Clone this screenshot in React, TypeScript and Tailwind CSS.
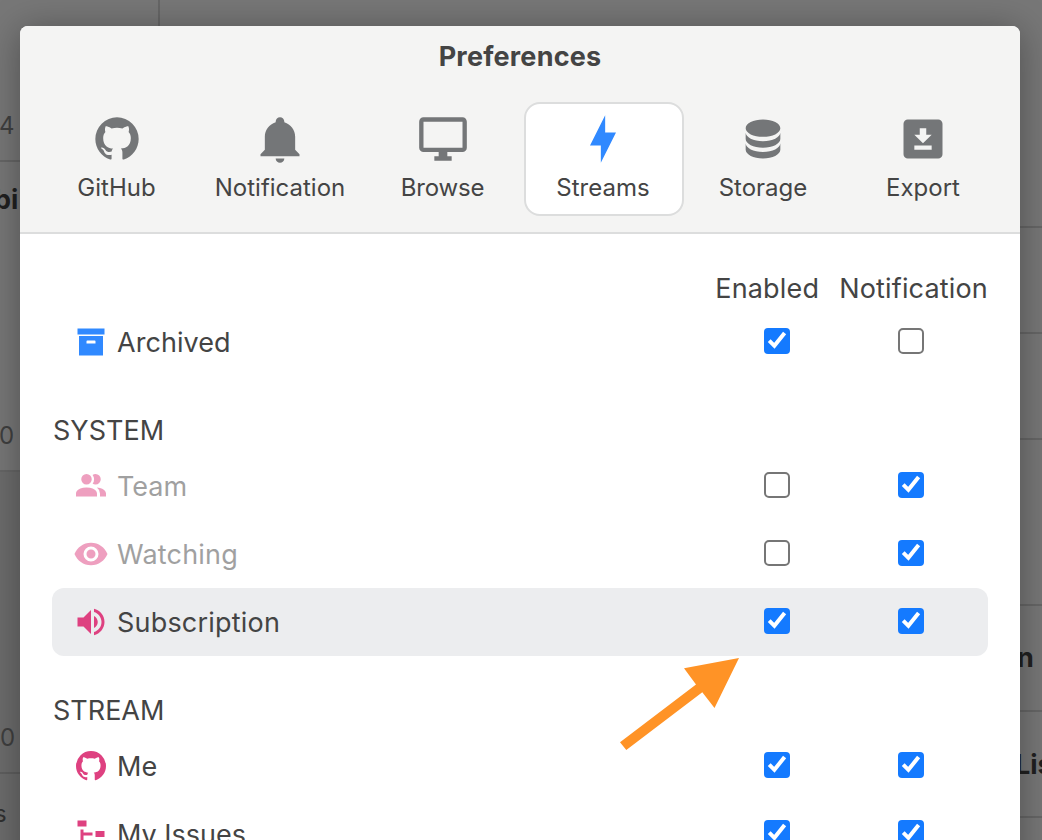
import React from "react";

const ICONS = {
  github:
    "M12,2A10,10 0 0,0 2,12C2,16.42 4.87,20.17 8.84,21.5C9.34,21.58 9.5,21.27 9.5,21C9.5,20.77 9.5,20.14 9.5,19.31C6.73,19.91 6.14,17.97 6.14,17.97C5.68,16.81 5.03,16.5 5.03,16.5C4.12,15.88 5.1,15.9 5.1,15.9C6.1,15.97 6.63,16.93 6.63,16.93C7.5,18.45 8.97,18 9.54,17.76C9.63,17.11 9.89,16.67 10.17,16.42C7.95,16.17 5.62,15.31 5.62,11.5C5.62,10.39 6,9.5 6.65,8.79C6.55,8.54 6.2,7.5 6.75,6.15C6.75,6.15 7.59,5.88 9.5,7.17C10.29,6.95 11.15,6.84 12,6.84C12.85,6.84 13.71,6.95 14.5,7.17C16.41,5.88 17.25,6.15 17.25,6.15C17.8,7.5 17.45,8.54 17.35,8.79C18,9.5 18.38,10.39 18.38,11.5C18.38,15.32 16.04,16.16 13.81,16.41C14.17,16.72 14.5,17.33 14.5,18.26C14.5,19.6 14.5,20.68 14.5,21C14.5,21.27 14.66,21.59 15.17,21.5C19.14,20.16 22,16.42 22,12A10,10 0 0,0 12,2Z",
  bell: "M21,19V20H3V19L5,17V11C5,7.9 7.03,5.17 10,4.29C10,4.19 10,4.1 10,4A2,2 0 0,1 12,2A2,2 0 0,1 14,4C14,4.1 14,4.19 14,4.29C16.97,5.17 19,7.9 19,11V17L21,19M14,21A2,2 0 0,1 12,23A2,2 0 0,1 10,21",
  monitor:
    "M21,16H3V4H21M21,2H3C1.89,2 1,2.89 1,4V16A2,2 0 0,0 3,18H10V20H8V22H16V20H14V18H21A2,2 0 0,0 23,16V4C23,2.89 22.1,2 21,2Z",
  bolt: "M11 15H6L13 1V9H18L11 23V15Z",
  database:
    "M12,3C7.58,3 4,4.79 4,7C4,9.21 7.58,11 12,11C16.42,11 20,9.21 20,7C20,4.79 16.42,3 12,3M4,9V12C4,14.21 7.58,16 12,16C16.42,16 20,14.21 20,12V9C20,11.21 16.42,13 12,13C7.58,13 4,11.21 4,9M4,14V17C4,19.21 7.58,21 12,21C16.42,21 20,19.21 20,17V14C20,16.21 16.42,18 12,18C7.58,18 4,16.21 4,14Z",
  download:
    "M5,3H19A2,2 0 0,1 21,5V19A2,2 0 0,1 19,21H5A2,2 0 0,1 3,19V5A2,2 0 0,1 5,3M8,17H16V15H8V17M16,10H13.5V7H10.5V10H8L12,14L16,10Z",
  archive:
    "M3,3H21V7H3V3M4,8H20V21H4V8M9.5,11A0.5,0.5 0 0,0 9,11.5V13H15V11.5A0.5,0.5 0 0,0 14.5,11H9.5Z",
  team: "M16 17V19H2V17S2 13 9 13 16 17 16 17M12.5 7.5A3.5 3.5 0 1 0 9 11A3.5 3.5 0 0 0 12.5 7.5M15.94 13A5.32 5.32 0 0 1 18 17V19H22V17S22 13.37 15.94 13M15 4A3.39 3.39 0 0 0 13.07 4.59A5 5 0 0 1 13.07 10.41A3.39 3.39 0 0 0 15 11A3.5 3.5 0 0 0 15 4Z",
  eye: "M12,9A3,3 0 0,0 9,12A3,3 0 0,0 12,15A3,3 0 0,0 15,12A3,3 0 0,0 12,9M12,17A5,5 0 0,1 7,12A5,5 0 0,1 12,7A5,5 0 0,1 17,12A5,5 0 0,1 12,17M12,4.5C7,4.5 2.73,7.61 1,12C2.73,16.39 7,19.5 12,19.5C17,19.5 21.27,16.39 23,12C21.27,7.61 17,4.5 12,4.5Z",
  volume:
    "M14,3.23V5.29C16.89,6.15 19,8.83 19,12C19,15.17 16.89,17.84 14,18.7V20.77C18,19.86 21,16.28 21,12C21,7.72 18,4.14 14,3.23M16.5,12C16.5,10.23 15.5,8.71 14,7.97V16C15.5,15.29 16.5,13.76 16.5,12M3,9V15H7L12,20V4L7,9H3Z",
  tree: "M3,3H9V7H3V3M15,10H21V14H15V10M15,17H21V21H15V17M13,13H7V18H13V20H7L5,20V9H7V11H13V13Z",
};

type IconName = keyof typeof ICONS;

function Icon({ name, className }: { name: IconName; className: string }) {
  return (
    <svg viewBox="0 0 24 24" fill="currentColor" className={className} aria-hidden="true">
      <path d={ICONS[name]} />
    </svg>
  );
}

function Checkbox({ checked }: { checked: boolean }) {
  return checked ? (
    <span role="checkbox" aria-checked="true" className="block size-[26px] rounded-[4px] bg-[#147aff]">
      <svg viewBox="0 0 26 26" className="size-full" fill="none" stroke="#fff" strokeWidth="4">
        <path d="M5.2 12.6 L10.4 17.8 L20.6 5" />
      </svg>
    </span>
  ) : (
    <span role="checkbox" aria-checked="false" className="block size-[26px] rounded-[5px] border-2 border-[#767676] bg-white" />
  );
}

interface RowProps {
  icon: IconName;
  color: string;
  label: string;
  enabled: boolean;
  notify: boolean;
  dim?: boolean;
  selected?: boolean;
  spacing: string;
}

function Row({ icon, color, label, enabled, notify, dim, selected, spacing }: RowProps) {
  return (
    <div className={`flex h-[68px] shrink-0 items-center rounded-[12px] pl-[21px] ${selected ? "bg-[#ecedef]" : ""}`}>
      <div className={`flex flex-1 items-center gap-2 ${dim ? "opacity-50" : ""}`}>
        <Icon name={icon} className={`size-9 ${color}`} />
        <span className={`whitespace-nowrap pt-[2px] text-[27px] leading-[34px] ${spacing}`}>{label}</span>
      </div>
      <div className="flex gap-[108px] pr-16 pb-[2px]">
        <Checkbox checked={enabled} />
        <Checkbox checked={notify} />
      </div>
    </div>
  );
}

interface TabProps {
  icon: IconName;
  label: string;
  className: string;
  active?: boolean;
}

function Tab({ icon, label, className, active }: TabProps) {
  return (
    <div
      className={`flex h-[114px] shrink-0 flex-col items-center rounded-[16px] border-2 pt-[9px] ${className} ${
        active ? "border-[#dcdddd] bg-white" : "border-transparent"
      }`}
    >
      <Icon name={icon} className={`size-[52px] ${active ? "text-[#3089ff]" : "text-[#747678]"}`} />
      <span className="mt-[7px] whitespace-nowrap text-[24px] leading-8">{label}</span>
    </div>
  );
}

function Backdrop() {
  return (
    <div className="absolute inset-0 flex bg-[#777777] text-[24px] leading-8 text-[#3f3f3f]">
      <div className="flex w-40 flex-col border-r-2 border-[#666666]">
        <div className="h-[162px] border-b-2 border-[#666666] pt-[110px] -indent-px">4</div>
        <div className="h-[310px] border-b-2 border-[#666666] pt-[22px]">
          <div className="-indent-[6px] text-[27px] font-bold text-[#202020]">bi</div>
          <div className="mt-[204px] -indent-px">0</div>
        </div>
        <div className="h-[302px] border-b-2 border-[#5f5f5f] bg-[#6c6c6c] pt-[250px]">0</div>
        <div className="flex-1 bg-[#6c6c6c] pt-[24px] -indent-[6px] text-[#303030]">s</div>
      </div>
      <div className="flex-1" />
      <div className="flex w-[24px] flex-col text-[27px] font-bold text-[#202020]">
        <div className="h-[228px] border-b-2 border-[#666666]" />
        <div className="h-[106px] border-b-2 border-[#666666]" />
        <div className="h-[106px] border-b-2 border-[#666666]" />
        <div className="h-[166px] border-b-2 border-[#666666]" />
        <div className="h-[106px] border-b-2 border-[#666666] pt-[36px] -indent-px">n</div>
        <div className="h-[106px] border-b-2 border-[#666666] pt-[37px] -indent-[3px]">Lis</div>
      </div>
    </div>
  );
}

export default function App() {
  return (
    <div className="relative h-[840px] w-[1042px] overflow-hidden font-['Inter',sans-serif] text-[#444444]">
      <Backdrop />
      <div className="relative mt-[26px] ml-5 flex h-[860px] w-[1000px] flex-col overflow-hidden rounded-t-[8px] bg-white shadow-[0_4px_36px_rgba(0,0,0,0.34)]">
        <header className="h-52 shrink-0 border-b-2 border-[#dcdddd] bg-[#f4f4f3]">
          <h1 className="pt-[14px] text-center text-[27px] leading-[34px] font-bold tracking-[0.2px]">Preferences</h1>
          <nav className="mt-[28px] flex pl-[16px]">
            <Tab icon="github" label="GitHub" className="w-[161px]" />
            <Tab icon="bell" label="Notification" className="w-[166px]" />
            <Tab icon="monitor" label="Browse" className="w-[161px] pr-[2px] tracking-[-0.2px]" />
            <Tab icon="bolt" label="Streams" className="w-[160px] pr-[2px]" active />
            <Tab icon="database" label="Storage" className="w-[160px] pr-[2px]" />
            <Tab icon="download" label="Export" className="w-[160px] pr-[2px]" />
          </nav>
        </header>
        <main className="flex flex-1 flex-col px-8 text-[27px] leading-[34px]">
          <div className="mt-[38px] mb-[2px] flex justify-end gap-5 tracking-[0.17px]">
            <span>Enabled</span>
            <span>Notification</span>
          </div>
          <Row icon="archive" color="text-[#3089ff]" label="Archived" enabled notify={false} spacing="tracking-[0.05px]" />
          <h2 className="mt-[35px] h-[41px] shrink-0 pl-px leading-[40px]">SYSTEM</h2>
          <Row icon="team" color="text-[#de4180]" label="Team" enabled={false} notify dim spacing="tracking-[0px]" />
          <Row icon="eye" color="text-[#de4180]" label="Watching" enabled={false} notify dim spacing="tracking-[0.2px]" />
          <Row icon="volume" color="text-[#de4180]" label="Subscription" enabled notify selected spacing="tracking-[0.2px]" />
          <h2 className="mt-[35px] h-[41px] shrink-0 pl-px leading-[40px]">STREAM</h2>
          <Row icon="github" color="text-[#de4180]" label="Me" enabled notify spacing="tracking-[0px]" />
          <Row icon="tree" color="text-[#de4180]" label="My Issues" enabled notify spacing="tracking-[0px]" />
        </main>
      </div>
      <svg className="absolute top-[650px] left-[612px] h-[110px] w-[136px]" viewBox="612 650 136 110" aria-hidden="true">
        <path d="M739 658 L714.5 708 L702.3 692.3 L626.3 750 L620 742.3 L696 684.5 L684 668.3 Z" fill="#ff9326" />
      </svg>
    </div>
  );
}
